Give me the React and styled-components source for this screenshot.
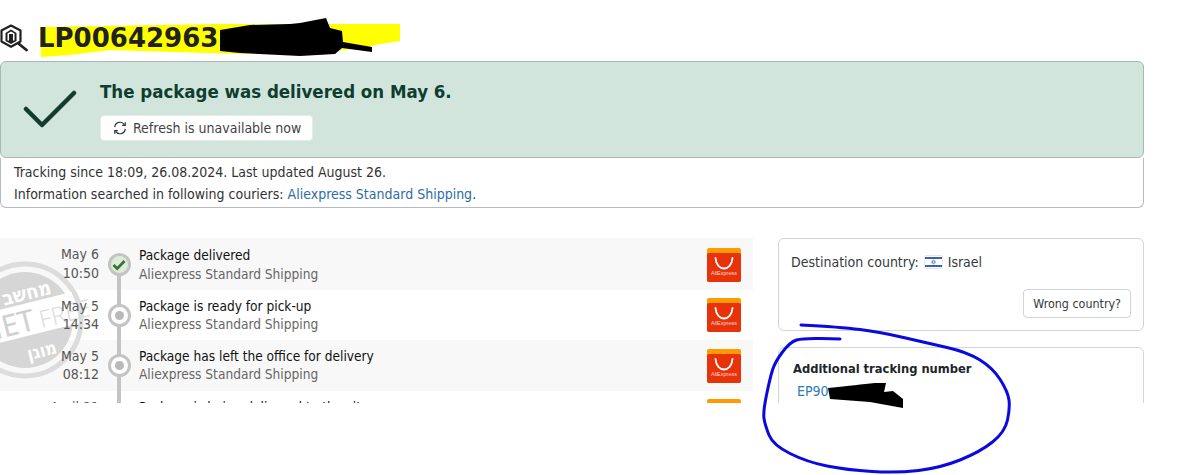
import React from "react";
import styled, { createGlobalStyle } from "styled-components";

const Global = createGlobalStyle`
  html, body { margin: 0; padding: 0; background: #fff; }
  body { font-family: "DejaVu Sans", "Noto Sans", sans-serif; font-stretch: condensed; font-size: 14px; color: #212529; }
`;
const Page = styled.div`
  position: relative;
  width: 1183px;
  height: 475px;
  overflow: hidden;
  box-sizing: border-box;
  padding-top: 14px;
`;
const Column = styled.div`width: 1144px;`;
const TitleRow = styled.div`
  height: 47px;
  display: flex;
  align-items: center;
  gap: 10px;
`;
const Title = styled.h1`
  position: relative;
  z-index: 2;
  margin: 0;
  font-family: "DejaVu Sans", sans-serif;
  font-stretch: normal;
  font-size: 26px;
  line-height: 38px;
  font-weight: 700;
  color: #212121;
`;
const Banner = styled.div`
  height: 97px;
  box-sizing: border-box;
  background: #d1e5dd;
  border: 1px solid #a7b8b2;
  border-radius: 6px;
  display: flex;
  align-items: center;
`;
const CheckBox = styled.div`
  width: 99px;
  flex: none;
  display: flex;
  justify-content: center;
`;
const BannerBody = styled.div`
  padding-top: 2px;
  display: flex;
  flex-direction: column;
  align-items: flex-start;
  gap: 11px;
`;
const Headline = styled.div`
  font-size: 18.5px;
  line-height: 24px;
  font-weight: 700;
  color: #0f3d2e;
`;
const Refresh = styled.div`
  height: 26px;
  box-sizing: border-box;
  padding: 0 11px 0 12px;
  background: #fff;
  border: 1px solid #e3ece8;
  border-radius: 4px;
  display: flex;
  align-items: center;
  gap: 6px;
  font-size: 14px;
  color: #3f4347;
`;
const InfoBox = styled.div`
  height: 50px;
  box-sizing: border-box;
  padding: 3px 13px 0;
  border: 1px solid #b4bcc0;
  border-top: none;
  border-radius: 0 0 6px 6px;
  font-size: 14px;
  line-height: 22px;
  color: #333;
`;
const Link = styled.span`color: #2e6da4;`;
const Content = styled.div`
  margin-top: 30px;
  height: 165px;
  overflow: hidden;
  display: flex;
  gap: 25px;
`;
const Timeline = styled.div`
  position: relative;
  width: 753px;
  flex: none;
`;
const Rail = styled.div`
  position: absolute;
  left: 117px;
  top: 20px;
  bottom: 0;
  width: 4px;
  background: #c4c4c4;
`;
const Row = styled.div`
  height: ${p => p.$h}px;
  background: ${p => (p.$shade ? "#f8f8f8" : "transparent")};
  display: flex;
  line-height: ${p => (p.$done ? 19 : 18)}px;
`;
const When = styled.div`
  width: 99px;
  flex: none;
  box-sizing: border-box;
  padding-top: 7px;
  text-align: right;
  font-size: 14px;
  color: #555;
  position: relative;
  z-index: 1;
`;
const DotCell = styled.div`
  width: 40px;
  flex: none;
  display: flex;
  justify-content: center;
  padding-top: ${p => (p.$done ? 15 : 14)}px;
  position: relative;
  z-index: 1;
`;
const Dot = styled.div`
  width: 23px;
  height: 23px;
  box-sizing: border-box;
  border-radius: 50%;
  border: 3px solid #c4c4c4;
  background: ${p => (p.$done ? "#dcedd5" : "#fff")};
  display: flex;
  align-items: center;
  justify-content: center;
`;
const Inner = styled.div`
  width: 9px;
  height: 9px;
  border-radius: 50%;
  background: #b9b9b9;
`;
const Event = styled.div`
  flex: 1;
  padding-top: ${p => (p.$done ? 8 : 7)}px;
  font-size: 13.6px;
  color: #111;
`;
const Courier = styled.div`color: #666;`;
const LogoCell = styled.div`
  width: 46px;
  flex: none;
  padding-top: ${p => p.$top}px;
`;
const Side = styled.div`
  flex: 1;
  display: flex;
  flex-direction: column;
  gap: 16px;
`;
const Card = styled.div`
  height: ${p => p.$h}px;
  flex: none;
  box-sizing: border-box;
  border: 1px solid #d2d4d6;
  border-radius: 6px;
  padding: ${p => p.$pad};
  font-size: 14px;
  color: #343a40;
`;
const CountryLine = styled.div`
  display: flex;
  align-items: center;
  gap: 5px;
  line-height: 20px;
`;
const WrongWrap = styled.div`
  display: flex;
  justify-content: flex-end;
  margin-top: 17px;
`;
const WrongBtn = styled.div`
  height: 29px;
  box-sizing: border-box;
  padding: 0 9px;
  border: 1px solid #ced4da;
  border-radius: 4px;
  display: flex;
  align-items: center;
  font-size: 12.4px;
  color: #343a40;
`;
const CardTitle = styled.div`
  font-size: 12.8px;
  line-height: 20px;
  font-weight: 700;
  color: #212529;
`;
const Tracking = styled.div`
  padding-left: 4px;
  font-size: 14px;
  line-height: 24px;
  color: #2f7ab8;
`;
const Watermark = styled.svg`
  position: absolute;
  left: -40px;
  top: 20px;
`;
const Annotation = styled.svg`
  position: absolute;
  left: 0;
  top: 0;
  z-index: ${p => p.$z};
  pointer-events: none;
`;

const Check = () => (
  <svg width="56" height="44" viewBox="0 0 56 44">
    <path d="M3 21 L19 37 L51 5" fill="none" stroke="#123c30" strokeWidth="4.5" strokeLinecap="round" strokeLinejoin="round" />
  </svg>
);
const RefreshIcon = () => (
  <svg width="14" height="14" viewBox="0 0 16 16" fill="none" stroke="#33373b" strokeWidth="1.4">
    <path d="M2 7A6 6 0 0 1 13 4.2" />
    <path d="M14 1.5V5H10.5" />
    <path d="M14 9A6 6 0 0 1 3 11.8" />
    <path d="M2 14.5V11H5.5" />
  </svg>
);
const SearchBox = () => (
  <svg width="28" height="28" viewBox="0 0 28 28" fill="none">
    <path d="M11 1.5 L20.5 6.5 V17.5 L11 22.8 L1.5 17.5 V6.5 Z" stroke="#222" strokeWidth="2.2" strokeLinejoin="round" />
    <path d="M5.5 9 L11 5.5 L16.5 9 V17 L11 20 L5.5 17 Z" fill="#222" />
    <path d="M7.5 9.5 L11 7.5 L14.5 9.5 V16.5 H7.5 Z" fill="#fff" />
    <rect x="9" y="10" width="4" height="8" fill="#222" />
    <path d="M19 20 L26.5 26" stroke="#222" strokeWidth="2.8" strokeLinecap="round" />
  </svg>
);
const AliLogo = () => (
  <svg width="34" height="34" viewBox="0 0 34 34">
    <rect width="34" height="34" rx="2" fill="#ff9a00" />
    <path d="M0 7 Q0 5 2 5 H32 Q34 5 34 7 V32 Q34 34 32 34 H2 Q0 34 0 32 Z" fill="#e8320a" />
    <path d="M8.5 10 C9.5 24 24.5 24 25.5 10" fill="none" stroke="#fff" strokeWidth="1.8" strokeLinecap="round" />
    <text x="17" y="27" textAnchor="middle" fontSize="5.5" fill="#fff" fillOpacity="0.8" fontFamily="Liberation Sans, sans-serif">AliExpress</text>
  </svg>
);
const Flag = () => (
  <svg width="19" height="14" viewBox="0 0 19 14">
    <rect x="0.5" y="0.5" width="18" height="13" rx="1.5" fill="#fff" stroke="#e2e6ea" />
    <rect x="1" y="2" width="17" height="2" fill="#3b62b0" />
    <rect x="1" y="10" width="17" height="2" fill="#3b62b0" />
    <path d="M9.5 4.6 L11.4 8 H7.6 Z M9.5 9.4 L7.6 6 H11.4 Z" fill="none" stroke="#5a7fc4" strokeWidth="0.6" />
  </svg>
);
const DoneTick = () => (
  <svg width="14" height="12" viewBox="0 0 14 12">
    <path d="M1.5 6 L5.2 9.6 L12.5 2" fill="none" stroke="#35733a" strokeWidth="2.8" />
  </svg>
);
const Stamp = () => (
  <Watermark width="130" height="124" viewBox="-65 -62 130 124">
    <circle r="56" fill="none" stroke="#dcdcdc" strokeWidth="5" />
    <circle r="48" fill="#d6d6d6" />
    <g transform="rotate(-14)">
      <rect x="-70" y="-16" width="122" height="32" fill="#fff" />
      <text x="-47" y="12" fontSize="30" fill="#d0d0d0" fontFamily="Noto Sans, sans-serif">NET</text>
      <text x="14" y="12" fontSize="24" fill="#dedede" fontWeight="300" fontFamily="Noto Sans, sans-serif">FREE</text>
      <text x="8" y="-19" textAnchor="middle" fontSize="20" fontWeight="700" fill="#fff" fontFamily="DejaVu Sans, sans-serif">מחשב</text>
      <text x="9" y="40" textAnchor="middle" fontSize="18" fontWeight="700" fill="#fff" fontFamily="DejaVu Sans, sans-serif">מוגן</text>
    </g>
  </Watermark>
);

const circlePts = [[801,325],[840,327],[880,332],[927,343],[967,352],[993,368],[1008,392],[1010,408],[1005,432],[980,452],[940,468],[897,473],[847,470],[807,462],[773,445],[765,425],[763,412],[770,378],[775,362],[790,342],[803,338],[840,339]];
const smooth = pts => {
  let d = `M${pts[0][0]} ${pts[0][1]}`;
  for (let i = 1; i < pts.length - 1; i++) {
    const mx = (pts[i][0] + pts[i + 1][0]) / 2;
    const my = (pts[i][1] + pts[i + 1][1]) / 2;
    d += ` Q${pts[i][0]} ${pts[i][1]} ${mx} ${my}`;
  }
  const last = pts[pts.length - 1];
  return `${d} L${last[0]} ${last[1]}`;
};

const rows = [
  { d: "May 6", t: "10:50", e: "Package delivered", h: 52, shade: true, done: true, top: 10 },
  { d: "May 5", t: "14:34", e: "Package is ready for pick-up", h: 50, top: 8 },
  { d: "May 5", t: "08:12", e: "Package has left the office for delivery", h: 51, shade: true, top: 9 },
  { d: "April 21", t: "07:40", e: "Package is being delivered to the city", h: 52, top: 8 },
];

export default function App() {
  return (
    <Page>
      <Global />
      <Annotation $z={1} width="1183" height="475">
        <path d="M40 27 L220 24 L400 24 L400 41 L345 50 L240 54 L110 50 L70 55 L41 57 Z" fill="#ffff00" />
      </Annotation>
      <Column>
        <TitleRow>
          <SearchBox />
          <Title>LP00642963</Title>
        </TitleRow>
        <Banner>
          <CheckBox><Check /></CheckBox>
          <BannerBody>
            <Headline>The package was delivered on May 6.</Headline>
            <Refresh><RefreshIcon />Refresh is unavailable now</Refresh>
          </BannerBody>
        </Banner>
        <InfoBox>
          <div>Tracking since 18:09, 26.08.2024. Last updated August 26.</div>
          <div>Information searched in following couriers: <Link>Aliexpress Standard Shipping</Link>.</div>
        </InfoBox>
        <Content>
          <Timeline>
            {rows.map(r => (
              <Row key={r.e} $h={r.h} $shade={r.shade} $done={r.done}>
                <When>{r.d}<br />{r.t}</When>
                <DotCell $done={r.done}>
                  <Dot $done={r.done}>{r.done ? <DoneTick /> : <Inner />}</Dot>
                </DotCell>
                <Event $done={r.done}>
                  {r.e}
                  <Courier>Aliexpress Standard Shipping</Courier>
                </Event>
                <LogoCell $top={r.top}><AliLogo /></LogoCell>
              </Row>
            ))}
            <Rail />
            <Stamp />
          </Timeline>
          <Side>
            <Card $h={93} $pad="13px 12px 0">
              <CountryLine>Destination country: <Flag /> Israel</CountryLine>
              <WrongWrap><WrongBtn>Wrong country?</WrongBtn></WrongWrap>
            </Card>
            <Card $h={120} $pad="11px 14px 0">
              <CardTitle>Additional tracking number</CardTitle>
              <Tracking>EP90</Tracking>
            </Card>
          </Side>
        </Content>
      </Column>
      <Annotation $z={3} width="1183" height="475">
        <path d="M220 30 L250 25 L290 24 L300 23 L326 18 L330 28 L342 31 L343 42 L372 47 L372 52 L342 48 L335 54 L300 56 L240 53 L220 51 Z" fill="#000" />
        <path d="M828 388 C850 386 862 384 875 383 L886 383 L884 392 L893 391 L903 399 L903 408 L870 402 L830 399 Z" fill="#000" />
        <path d={smooth(circlePts)} fill="none" stroke="#0a0adf" strokeWidth="3" strokeLinecap="round" />
      </Annotation>
    </Page>
  );
}
